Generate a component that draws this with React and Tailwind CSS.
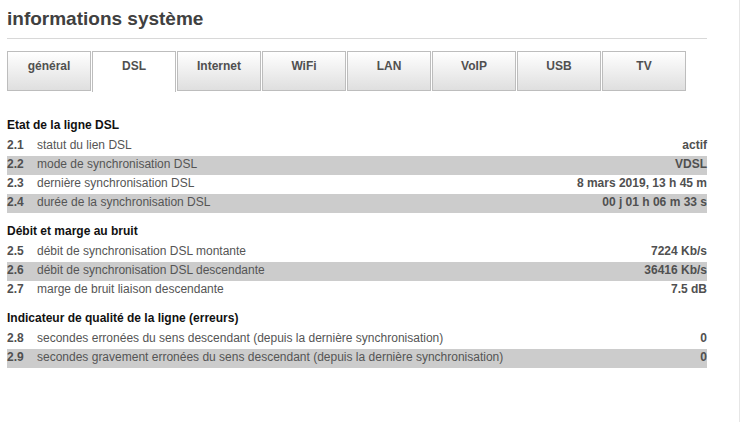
import React from "react";

const tabs = ["général", "DSL", "Internet", "WiFi", "LAN", "VoIP", "USB", "TV"];

const sections = [
  {
    title: "Etat de la ligne DSL",
    rows: [
      ["2.1", "statut du lien DSL", "actif"],
      ["2.2", "mode de synchronisation DSL", "VDSL"],
      ["2.3", "dernière synchronisation DSL", "8 mars 2019, 13 h 45 m"],
      ["2.4", "durée de la synchronisation DSL", "00 j 01 h 06 m 33 s"],
    ],
  },
  {
    title: "Débit et marge au bruit",
    rows: [
      ["2.5", "débit de synchronisation DSL montante", "7224 Kb/s"],
      ["2.6", "débit de synchronisation DSL descendante", "36416 Kb/s"],
      ["2.7", "marge de bruit liaison descendante", "7.5 dB"],
    ],
  },
  {
    title: "Indicateur de qualité de la ligne (erreurs)",
    rows: [
      ["2.8", "secondes erronées du sens descendant (depuis la dernière synchronisation)", "0"],
      ["2.9", "secondes gravement erronées du sens descendant (depuis la dernière synchronisation)", "0"],
    ],
  },
];

export default function App() {
  return (
    <div
      className="flex w-[741px] h-[422px] bg-white overflow-hidden"
      style={{ fontFamily: '"Liberation Sans", Arial, sans-serif' }}
    >
      <div className="w-[739px] pl-[7px]">
        <h1 className="mt-[9px] text-[19px] leading-[19px] font-bold text-[#404040]">
          informations système
        </h1>
        <div className="mt-[10px] w-[700px] h-px bg-[#d8d8d8]" />
        <div className="mt-[12px] flex items-start h-[41px]">
          {tabs.map((t) => {
            const active = t === "DSL";
            return (
              <div
                key={t}
                className={
                  active
                    ? "w-[84px] mr-px h-[41px] border border-b-0 border-[#bdbdbd] bg-white pt-[6px] text-center text-[12px] leading-[17px] font-bold text-[#505050]"
                    : "w-[84px] mr-px h-[40px] border border-[#bdbdbd] bg-gradient-to-b from-[#ffffff] to-[#dfdfdf] pt-[6px] text-center text-[12px] leading-[17px] font-bold text-[#505050]"
                }
              >
                {t}
              </div>
            );
          })}
        </div>
        <div className="mt-[25px] w-[700px] flex flex-col gap-[10px]">
          {sections.map((s) => (
            <div key={s.title}>
              <div className="text-[12px] leading-[17px] mb-[3px] font-bold text-[#111]">
                {s.title}
              </div>
              {s.rows.map(([n, label, value], i) => (
                <div
                  key={n}
                  className={
                    i % 2 === 1
                      ? "flex h-[19px] items-start bg-[#cccccc] text-[12px] leading-[17px] text-[#555]"
                      : "flex h-[19px] items-start text-[12px] leading-[17px] text-[#555]"
                  }
                >
                  <span className="w-[30px] font-bold text-[#505050]">{n}</span>
                  <span className="flex-1">{label}</span>
                  <span className="font-bold text-[#505050]">{value}</span>
                </div>
              ))}
            </div>
          ))}
        </div>
      </div>
      <div className="w-px h-full bg-[#e6e6e6]" />
    </div>
  );
}
